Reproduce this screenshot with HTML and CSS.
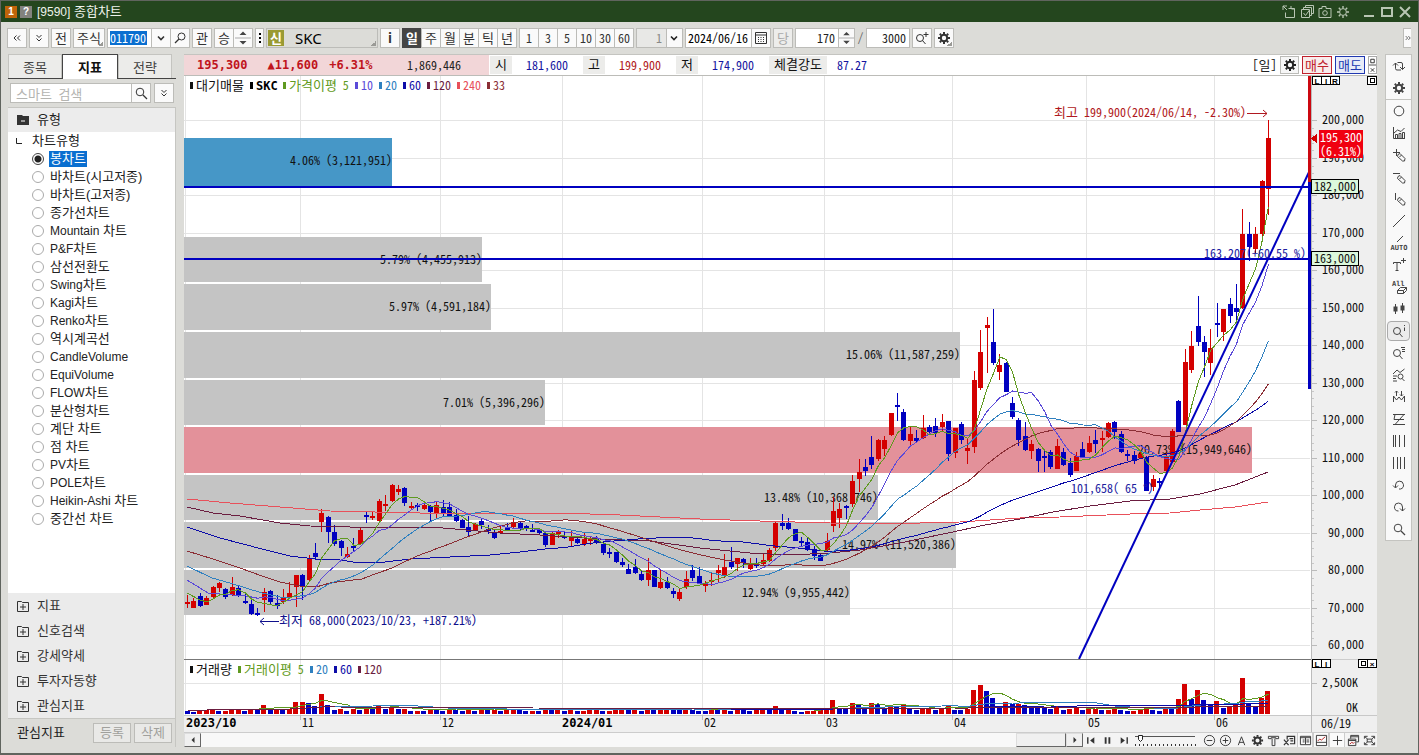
FILE: index.html
```html
<!DOCTYPE html>
<html lang="ko">
<head>
<meta charset="utf-8">
<title>[9590] 종합차트</title>
<link rel="stylesheet" href="styles.css">
</head>
<body>
<svg class="defs" aria-hidden="true">
  <symbol id="gear" viewBox="0 0 14 14"><circle cx="7" cy="7" r="3.2" fill="none" stroke="currentColor" stroke-width="2"/><path d="M7 1v2M7 11v2M1 7h2M11 7h2M2.8 2.8l1.4 1.4M9.8 9.8l1.4 1.4M2.8 11.2l1.4-1.4M9.8 4.2l1.4-1.4" stroke="currentColor" stroke-width="2"/></symbol>
  <symbol id="gear-thin" viewBox="0 0 14 14"><circle cx="7" cy="7" r="3.4" fill="none" stroke="currentColor"/><path d="M7 1v2.5M7 10.500v2.500M1 7h2.500M10.500 7h2.500M2.800 2.800l1.600 1.600M9.600 9.600l1.600 1.600M2.800 11.200l1.600-1.600M9.600 4.400l1.600-1.600" stroke="currentColor" stroke-width="1.400"/></symbol>
  <symbol id="mag" viewBox="0 0 14 14"><circle cx="6" cy="6" r="3.800" fill="none" stroke="currentColor"/><path d="M9 9l4 4" stroke="currentColor" stroke-width="1.300"/></symbol>
  <symbol id="mag-left" viewBox="0 0 14 14"><circle cx="8.500" cy="5.500" r="3.500" fill="none" stroke="currentColor"/><path d="M6 8l-4 4" stroke="currentColor" stroke-width="1.300"/></symbol>
  <symbol id="down" viewBox="0 0 14 14"><path d="M4 5.500l3 3 3-3" fill="none" stroke="currentColor" stroke-width="1.600"/></symbol>
  <symbol id="chev-l" viewBox="0 0 14 14"><path d="M6.500 4.500L4 7l2.500 2.500M10 4.500L7.500 7 10 9.500" fill="none" stroke="currentColor"/></symbol>
  <symbol id="chev-r" viewBox="0 0 14 14"><path d="M4 4.500L6.500 7 4 9.500M7.500 4.500L10 7 7.500 9.500" fill="none" stroke="currentColor"/></symbol>
  <symbol id="chev-d" viewBox="0 0 14 14"><path d="M4.500 4L7 6.500 9.500 4M4.500 7.500L7 10l2.500-2.500" fill="none" stroke="currentColor"/></symbol>
  <symbol id="spin" viewBox="0 0 16 18"><path d="M4.500 6L8 2.500 11.500 6zM4.500 12L8 15.500 11.500 12z" fill="#444"/><path d="M0 9h16" stroke="#aaa"/></symbol>
  <symbol id="plusbox" viewBox="0 0 12 12"><path d="M.5 1.500h4l1 1h6v9h-11zM3 7h6M6 4v6" fill="none" stroke="#333"/></symbol>
  <symbol id="pencil" viewBox="0 0 14 14"><path d="M6 6.500l2-1 5 5-.5 2.500-2 0-5-4.500z M7.500 9l2-2" fill="none" stroke="currentColor"/></symbol>
</svg>

<div class="window">
  <header class="titlebar">
    <span class="badge orange">1</span><span class="badge grey">?</span>
    <h1><small>[9590]</small> 종합차트</h1>
    <div class="winctl">
      <button aria-label="분리"><svg viewBox="0 0 14 14"><path d="M1 5V1h4M1 1l4 4M6.500 3.500h6v9h-9v-5M9 1v3M9.500 4h3" fill="none" stroke="currentColor"/></svg></button>
      <button aria-label="복사"><svg viewBox="0 0 14 14"><path d="M1.500 4.500h8v8h-8zM3.500 4V2.500h8v8H10M5.500 2V.5h8v8H12M3.500 8l2 2.500L9.500 5" fill="none" stroke="currentColor"/></svg></button>
      <button aria-label="캡처"><svg viewBox="0 0 14 14"><path d="M1 3.500h3v-2h4v2h5v9H1z" fill="none" stroke="currentColor"/><circle cx="7" cy="8" r="2.300" fill="none" stroke="currentColor"/></svg></button>
      <button aria-label="설정"><svg><use href="#gear-thin"/></svg></button>
      <button aria-label="최소화" class="wide"><svg viewBox="0 0 14 14"><path d="M2 11h10" stroke="currentColor" stroke-width="2"/></svg></button>
      <button aria-label="최대화"><svg viewBox="0 0 14 14"><path d="M2 3h10v8H2z" fill="none" stroke="currentColor" stroke-width="2"/></svg></button>
      <button aria-label="닫기"><svg viewBox="0 0 14 14"><path d="M2 2l10 10M12 2L2 12" stroke="currentColor" stroke-width="2"/></svg></button>
    </div>
  </header>

  <nav class="toolbar">
    <button class="tb" aria-label="이전"><svg><use href="#chev-l"/></svg></button>
    <button class="tb" aria-label="펼치기"><svg><use href="#chev-d"/></svg></button>
    <button class="tb">전</button>
    <button class="tb w-kind corner">주식</button>
    <div class="group">
      <span class="codebox"><input class="code" aria-label="종목코드" value="011790"></span>
      <button class="tb" aria-label="목록"><svg><use href="#down"/></svg></button>
      <button class="tb" aria-label="종목검색"><svg><use href="#mag-left"/></svg></button>
    </div>
    <button class="tb">관</button>
    <div class="group">
      <button class="tb">승</button>
      <button class="tb" aria-label="위아래"><svg class="spin"><use href="#spin"/></svg></button>
    </div>
    <button class="tb w-dots" aria-label="더보기"><svg viewBox="0 0 4 14"><path d="M1 2h2v2H1zM1 6h2v2H1zM1 10h2v2H1z"/></svg></button>
    <button class="stock corner"><span>신</span>SKC</button>
    <button class="tb info">i</button>
    <div class="group periods">
      <button class="tb on">일</button><button class="tb">주</button><button class="tb">월</button><button class="tb">분</button><button class="tb">틱</button><button class="tb">년</button>
    </div>
    <div class="group counts">
      <button class="tb">1</button><button class="tb">3</button><button class="tb">5</button><button class="tb">10</button><button class="tb">30</button><button class="tb">60</button>
    </div>
    <div class="selectbox"><select aria-label="간격" disabled><option>1</option></select><svg><use href="#down"/></svg></div>
    <div class="group">
      <input class="field date" aria-label="날짜" value="2024/06/16">
      <button class="tb" aria-label="달력"><svg viewBox="0 0 14 14"><path d="M1.500 1.500h11v11h-11zM1.500 4h11M4 6.500h1M6.500 6.500h1M9 6.500h1M4 8.500h1M6.500 8.500h1M9 8.500h1M4 10.500h1M6.500 10.500h1M9 10.500h1" fill="none" stroke="currentColor"/></svg></button>
    </div>
    <button class="tb off">당</button>
    <div class="group">
      <input class="field num" aria-label="표시 개수" value="170">
      <button class="tb w-spin" aria-label="개수 조절"><svg class="spin"><use href="#spin"/></svg></button>
    </div>
    <span class="slash">/</span>
    <input class="field num" aria-label="전체 개수" value="3000">
    <button class="tb" aria-label="확대"><svg viewBox="0 0 14 14"><circle cx="5" cy="7" r="3.500" fill="none" stroke="currentColor"/><path d="M7.500 9.500L10.500 13M8.500 3.500h5M11 1v5" stroke="currentColor"/></svg></button>
    <button class="tb corner" aria-label="설정"><svg><use href="#gear"/></svg></button>
    <button class="tb more" aria-label="더보기"><svg viewBox="3 0 8 14"><path d="M4 4.500L6.500 7 4 9.500M7.500 4.500L10 7 7.500 9.500" fill="none" stroke="currentColor"/></svg></button>
  </nav>

  <div class="body">
    <aside class="side">
      <div class="tabs" role="tablist">
        <button role="tab">종목</button><button role="tab" class="on" aria-selected="true">지표</button><button role="tab">전략</button>
      </div>
      <div class="search">
        <input aria-label="스마트 검색" placeholder="스마트 검색">
        <button class="tb" aria-label="검색"><svg><use href="#mag"/></svg></button>
        <button class="tb gap" aria-label="펼치기"><svg><use href="#chev-d"/></svg></button>
      </div>
      <section class="panel">
        <h2><svg viewBox="0 0 12 10"><path d="M0 0h5l1 1h6v9H0z" fill="#333"/><path d="M4 6h4" stroke="#fff"/></svg>유형</h2>
        <fieldset class="tree">
          <legend><svg viewBox="0 0 6 6"><path d="M.5 0v5.500H6" fill="none" stroke="#222"/></svg>차트유형</legend>
          <label><input type="radio" name="t" checked><span>봉차트</span></label>
          <label><input type="radio" name="t"><span>바차트(시고저종)</span></label>
          <label><input type="radio" name="t"><span>바차트(고저종)</span></label>
          <label><input type="radio" name="t"><span>종가선차트</span></label>
          <label><input type="radio" name="t"><span><small>Mountain</small> 차트</span></label>
          <label><input type="radio" name="t"><span><small>P&amp;F</small>차트</span></label>
          <label><input type="radio" name="t"><span>삼선전환도</span></label>
          <label><input type="radio" name="t"><span><small>Swing</small>차트</span></label>
          <label><input type="radio" name="t"><span><small>Kagi</small>차트</span></label>
          <label><input type="radio" name="t"><span><small>Renko</small>차트</span></label>
          <label><input type="radio" name="t"><span>역시계곡선</span></label>
          <label><input type="radio" name="t"><span><small>CandleVolume</small></span></label>
          <label><input type="radio" name="t"><span><small>EquiVolume</small></span></label>
          <label><input type="radio" name="t"><span><small>FLOW</small>차트</span></label>
          <label><input type="radio" name="t"><span>분산형차트</span></label>
          <label><input type="radio" name="t"><span>계단 차트</span></label>
          <label><input type="radio" name="t"><span>점 차트</span></label>
          <label><input type="radio" name="t"><span><small>PV</small>차트</span></label>
          <label><input type="radio" name="t"><span><small>POLE</small>차트</span></label>
          <label><input type="radio" name="t"><span><small>Heikin-Ashi</small> 차트</span></label>
          <label><input type="radio" name="t"><span>중간선 차트</span></label>
        </fieldset>
        <ul class="folders">
          <li><button><svg><use href="#plusbox"/></svg>지표</button></li>
          <li><button><svg><use href="#plusbox"/></svg>신호검색</button></li>
          <li><button><svg><use href="#plusbox"/></svg>강세약세</button></li>
          <li><button><svg><use href="#plusbox"/></svg>투자자동향</button></li>
          <li><button><svg><use href="#plusbox"/></svg>관심지표</button></li>
        </ul>
        <div class="fav"><span>관심지표</span><button disabled>등록</button><button disabled>삭제</button></div>
      </section>
    </aside>

    <main class="main">
      <div class="quote">
        <div class="now"><b class="price">195,300</b><b class="diff">▲11,600</b><b class="rate">+6.31%</b><span class="vol">1,869,446</span></div>
        <span class="key">시</span><span class="val blue">181,600</span>
        <span class="key">고</span><span class="val red">199,900</span>
        <span class="key">저</span><span class="val blue">174,900</span>
        <span class="key wide">체결강도</span><span class="val blue last">87.27</span>
        <div class="orders">
          <span>[일]</span>
          <button class="ord" aria-label="차트 설정"><svg><use href="#gear"/></svg></button>
          <button class="ord buy">매수</button>
          <button class="ord sell">매도</button>
          <div class="mini"><button aria-label="최대화"><svg viewBox="0 0 8 8"><path d="M2 2h4v4H2z" fill="none" stroke="#222"/></svg></button><button aria-label="닫기"><svg viewBox="0 0 8 8"><path d="M2 2l4 4M6 2L2 6" stroke="#222"/></svg></button></div>
        </div>
      </div>
      <svg id="chart" class="chart" viewBox="184 76 1193 656" preserveAspectRatio="xMinYMin meet" role="img" aria-label="SKC 일봉 차트"></svg>
      <div class="bottombar">
        <div class="scroll"><button aria-label="왼쪽"><svg viewBox="0 0 8 8"><path d="M5.500 1v6l-3-3z"/></svg></button><div class="track"><div class="thumb"></div></div><button aria-label="오른쪽"><svg viewBox="0 0 8 8"><path d="M2.500 1v6l3-3z"/></svg></button></div>
        <button aria-label="처음"><svg viewBox="0 0 14 14"><path d="M3 3.500v7" stroke="currentColor" stroke-width="1.500"/><path d="M10 3.500v7L5.500 7z"/></svg></button>
        <button aria-label="일시정지"><svg viewBox="0 0 14 14"><path d="M5 3.500v7M9 3.500v7" stroke="currentColor" stroke-width="2"/></svg></button>
        <button aria-label="끝"><svg viewBox="0 0 14 14"><path d="M11 3.500v7" stroke="currentColor" stroke-width="1.500"/><path d="M4 3.500v7L8.500 7z"/></svg></button>
        <svg class="slider" viewBox="0 0 64 14"><path d="M1 3.500h60" stroke="#555"/><path d="M1 12h62" stroke="#333" stroke-width="2" stroke-dasharray="1 3"/><path d="M4.500 2.500h4v4l-2 2-2-2z" fill="#fff" stroke="#222"/></svg>
        <button aria-label="축소"><svg viewBox="0 0 14 14"><circle cx="7" cy="7" r="5.500" fill="none" stroke="currentColor"/><path d="M4 7h6" stroke="currentColor"/></svg></button>
        <button aria-label="확대"><svg viewBox="0 0 14 14"><circle cx="7" cy="7" r="5.500" fill="none" stroke="currentColor"/><path d="M4 7h6M7 4v6" stroke="currentColor"/></svg></button>
        <button aria-label="글꼴"><svg viewBox="0 0 14 14"><path d="M3.500 12L7 3l3.500 9M4.500 9h5" fill="none" stroke="currentColor"/></svg></button>
        <button aria-label="설정"><svg><use href="#gear"/></svg></button>
        <button aria-label="도구"><svg viewBox="0 0 14 14"><path d="M1.500 5V2.500h11V5H9.500V4h-5v1zM5.500 5v7.500h3V5" fill="none" stroke="currentColor"/></svg></button>
        <button aria-label="삭제"><svg viewBox="0 0 14 14"><path d="M4.500 6V2.500h8v8h-5M7 5h4M8 7.500h3M1 6l5 6M6 6l-5 6" fill="none" stroke="currentColor" stroke-width="1.300"/></svg></button>
        <button class="on" aria-label="데이터창"><svg viewBox="0 0 14 14"><path d="M1.500 2.500h11v9h-11zM1.500 4h11M4 6.500h2M4 8.500h2M8 6.500h3M8 8.500h3M7 4v7" fill="none" stroke="currentColor"/></svg></button>
        <button class="on" aria-label="차트"><svg viewBox="0 0 14 14"><path d="M1.500 1.500h11v11h-11zM1.500 9h11" fill="none" stroke="currentColor"/><path d="M3 7.500l2-2 2 1 4-3.500" fill="none" stroke="#b22"/></svg></button>
        <button class="on" aria-label="십자선"><svg viewBox="0 0 14 14"><path d="M7 2v10M2 7h10" stroke="currentColor"/></svg></button>
        <button aria-label="창"><svg viewBox="0 0 14 14"><path d="M1.500 5.500h8v7h-8zM1.500 7h8M4 5V1.500h8.500v7H10M4 3h8" fill="none" stroke="currentColor"/><path d="M3 11l2-2 2 1 1-1" fill="none" stroke="#b22"/></svg></button>
        <button aria-label="전체화면"><svg viewBox="0 0 14 14"><path d="M1.500 5V2.500H5M9 2.500h3.500V5M12.500 9v2.500H9M5 11.500H1.500V9M4.500 5.500h5v3h-5zM2 3l3 2.500M12 3L9.500 5.500M2 11l3-2.500M12 11L9.500 8.500" fill="none" stroke="currentColor"/></svg></button>
      </div>
    </main>

    <div class="tools" id="tools">
      <button aria-label="새로고침"><svg viewBox="0 0 14 14"><path d="M3.500 4v5.500q0 1.500 1.500 1.500h4M1 6.500L3.500 4 6 6.500M10.500 10.500V5q0-1.500-1.500-1.500H5.500M8 8l2.500 2.500L13 8" fill="none" stroke="currentColor"/></svg></button>
      <button aria-label="설정" class="end"><svg><use href="#gear"/></svg></button>
      <button aria-label="원"><svg viewBox="0 0 14 14"><circle cx="7" cy="7" r="4.800" fill="none" stroke="currentColor"/></svg></button>
      <button aria-label="지표"><svg viewBox="0 0 14 14"><path d="M1.500 1v11.500H13M3.500 12V8.500h2V12M7 12V7.500h2V12M10.500 12V6.500h2V12M2 7l3.500-3L9 5.500 12.500 2" fill="none" stroke="currentColor"/></svg></button>
      <button aria-label="십자선"><svg viewBox="0 0 14 14"><path d="M1 4.500h7M4.500 1v7" stroke="currentColor"/><use href="#pencil"/></svg></button>
      <button aria-label="수평선"><svg viewBox="0 0 14 14"><path d="M1 3.500h7" stroke="currentColor"/><use href="#pencil"/></svg></button>
      <button aria-label="수직선"><svg viewBox="0 0 14 14"><path d="M3.500 1v7" stroke="currentColor"/><use href="#pencil"/></svg></button>
      <button aria-label="추세선"><svg viewBox="0 0 14 14"><path d="M1 13L13 1" stroke="currentColor"/></svg></button>
      <button aria-label="자동추세선"><svg class="big" viewBox="0 0 18 18"><path d="M7 8l6-6" stroke="currentColor"/><text x="9" y="16" class="tiny" text-anchor="middle">AUTO</text></svg></button>
      <button aria-label="텍스트"><svg viewBox="0 0 14 14"><path d="M1.500 6V4.500h7V6M5 4.500v8M3.500 12.500h3M9 2.500h5M11.500 0v5" fill="none" stroke="currentColor"/></svg></button>
      <button aria-label="전체 지우기"><svg class="big" viewBox="0 0 18 18"><text x="2" y="8" class="tiny">All</text><path d="M7.500 12.500l3-3h6v3l-3 3h-6zM7.500 12.500h6l3-3M13.500 12.500v3" fill="none" stroke="currentColor"/></svg></button>
      <button aria-label="봉차트"><svg viewBox="0 0 14 14"><path d="M1.500 4.500h4v5h-4zM8.500 3.500h4v5h-4z"/><path d="M3.500 2v10M10.500 1v10" stroke="currentColor"/></svg></button>
      <button aria-label="정보" class="on"><svg viewBox="0 0 14 14"><circle cx="5" cy="7" r="3.500" fill="none" stroke="currentColor"/><path d="M7.500 9.500L10.500 13M12.500 1v1M12.500 3.500V7" stroke="currentColor"/></svg></button>
      <button aria-label="목록 검색"><svg viewBox="0 0 14 14"><circle cx="5" cy="7" r="3.500" fill="none" stroke="currentColor"/><path d="M7.500 9.500L10.500 13M9 1.500h4M10 3.500h3M10 5.500h3" stroke="currentColor"/></svg></button>
      <button aria-label="차트 검색"><svg viewBox="0 0 14 14"><path d="M1 6l4-4 3 2.500L12.500 1M1 8h4M1 10.500h3M1 13h4" fill="none" stroke="currentColor"/><circle cx="8.500" cy="8.500" r="2.500" fill="none" stroke="currentColor"/><path d="M10 10.500l2.500 2.500" stroke="currentColor"/></svg></button>
      <button aria-label="변곡점"><svg viewBox="0 0 14 14"><path d="M1.500 12V6l3 4L7 7l2.500 3 3-4v6M4.500 6V1M3 2.500L4.500 1 6 2.500M9.500 1v5M8 4.500L9.500 6 11 4.500" fill="none" stroke="currentColor"/></svg></button>
      <button aria-label="채널"><svg viewBox="0 0 14 14"><path d="M1 2.500h12M1 12.500h12M2 7.500h10M3 2.500l-1 5M12 2.500L3 12.500" fill="none" stroke="currentColor"/></svg></button>
      <button aria-label="분할선"><svg viewBox="0 0 14 14"><path d="M1.500 1v12M3.500 1v12M7.500 1v12M12.500 1v12" stroke="currentColor"/></svg></button>
      <button aria-label="등분선"><svg viewBox="0 0 14 14"><path d="M1.500 1v12M5.500 1v12M8.500 1v12M12.500 1v12" stroke="currentColor"/></svg></button>
      <button aria-label="실행취소"><svg viewBox="0 0 14 14"><path d="M3.500 9.500V7a4 4 0 1 1 5 4H7M1 7.500L3.500 10 6 7.500" fill="none" stroke="currentColor"/></svg></button>
      <button aria-label="다시실행"><svg viewBox="0 0 14 14"><path d="M6.500 11H6a4 4 0 1 1 4.500-4v4M8 8.500l2.500 2.500L13 8.500" fill="none" stroke="currentColor"/></svg></button>
      <button aria-label="돋보기"><svg><use href="#mag"/></svg></button>
    </div>
  </div>
</div>
<script src="chart.js"></script>
</body>
</html>
```

FILE: styles.css
```css
* { box-sizing: border-box; }
body {
  margin: 0;
  min-height: 100vh;
  font: 12px/16px "Noto Sans Mono CJK KR", "Liberation Sans", "Noto Sans CJK KR", sans-serif;
  color: #222;
  background: #dcdcd8;
}
h1, h2, ul, fieldset, legend { margin: 0; padding: 0; border: 0; font: inherit; list-style: none; }
button, input, select { font: inherit; color: inherit; margin: 0; padding: 0; border-radius: 0; }
button { display: flex; align-items: center; justify-content: center; border: 0; background: none; }
small { font-size: 12px; }
svg { display: block; width: 14px; height: 14px; }
.defs { position: absolute; width: 0; height: 0; }

.window {
  display: flex;
  flex-direction: column;
  min-height: 100vh;
  border: 1px solid #60645e;
  border-bottom-width: 2px;
}

.titlebar { display: flex; align-items: center; height: 21px; padding: 0 6px 0 4px; background: #24461e; color: #eef2ec; }
.titlebar h1 { font-family: "Liberation Sans", "Noto Sans Mono CJK KR", sans-serif; font-size: 13px; margin-left: 5px; }
.badge { width: 12px; height: 12px; margin-right: 3px; font: bold 10px/12px "Liberation Sans", sans-serif; text-align: center; color: #fff; }
.badge.orange { background: #c0640a; }
.badge.grey { background: #82827e; margin-right: 0; }
.winctl { display: flex; gap: 4px; margin-left: auto; color: #b9c6b4; }
.winctl .wide { margin-left: 8px; }

.toolbar { display: flex; align-items: center; gap: 2px; height: 32px; padding: 0 7px 0 6px; }
.group { display: flex; }
.group > * + * { margin-left: -1px; }
.tb { flex: none; width: 20px; height: 20px; border: 1px solid #bcbcb8; background: #fafafa; color: #333; font-size: 13px; }
.counts .tb { font-size: 12px; }
.w-kind { width: 32px; }
.w-dots { width: 9px; }
.w-spin { width: 17px; }
.w-dots svg { width: 4px; }
.spin { width: 16px; height: 18px; }
.corner { background-image: linear-gradient(135deg, transparent 50%, #9a9a96 50%); background-size: 5px 5px; background-position: right 1px bottom 1px; background-repeat: no-repeat; }
.codebox { width: 45px; height: 20px; padding: 2px; border: 1px solid #bcbcb8; background: #fff; }
.code { display: block; width: 37px; height: 14px; border: 0; background: #0a6fd0; color: #fff; }
.stock { width: 112px; height: 20px; justify-content: flex-start; gap: 11px; border: 1px solid #bcbcb8; background-color: #dcdcd8; font: 15px/18px "Noto Sans", sans-serif; color: #000; }
.stock span { width: 16px; margin-left: 1px; font: bold 13px/16px "Noto Sans Mono CJK KR", "Noto Sans CJK KR", sans-serif; background: #9a9a33; color: #fff; }
.info { font-weight: bold; }
.periods .on { background: #444; border-color: #444; color: #fff; font-weight: bold; }
.selectbox { display: flex; width: 47px; height: 20px; border: 1px solid #bcbcb8; background: #fafafa; }
.selectbox select { appearance: none; width: 30px; border: 0; border-right: 1px solid #bcbcb8; background: #e8e8e6; color: #888; opacity: 1; text-align: right; padding-right: 4px; }
.selectbox svg { margin: 2px 0; }
.field { height: 20px; padding-bottom: 2px; border: 1px solid #bcbcb8; background: #fff; }
.date { width: 67px; padding-left: 2px; color: #000; }
.num { width: 44px; padding-right: 3px; text-align: right; }
.slash { width: 7px; text-align: center; color: #666; }
.off { color: #aaa; background: #ededeb; }
.more { width: 8px; margin-left: auto; border-right: 0; }
.more svg { width: 6px; }

.body { display: flex; flex: 1; align-items: stretch; gap: 8px; padding: 0 6px 6px 7px; }

.side { display: flex; flex-direction: column; width: 168px; flex: none; font-size: 13px; }
.tabs { display: flex; height: 25px; border-bottom: 1px solid #444; }
.tabs button { width: 54px; height: 24px; border: 1px solid #c4c4c0; border-bottom: 0; background: #ececea; color: #444; }
.tabs .on { width: 56px; height: 25px; border-color: #444; background: #fff; font-weight: bold; color: #111; }
.search { display: flex; padding: 4px 3px 4px 2px; }
.search input { width: 122px; height: 20px; padding-left: 5px; border: 1px solid #bcbcb8; background: #fff; }
.search input::placeholder { color: #b4b4b0; opacity: 1; }
.search .tb { margin-left: -1px; }
.search .gap { margin-left: 3px; }
.panel { display: flex; flex-direction: column; flex: 1; border: 1px solid #c6c6c2; border-width: 1px 1px 0 0; background: #fff; font-family: "Liberation Sans", "Noto Sans Mono CJK KR", "Noto Sans CJK KR", sans-serif; }
.panel h2 { display: flex; align-items: center; height: 24px; gap: 8px; padding-left: 9px; background: #ececec; }
.panel h2 svg { width: 12px; height: 10px; }
.tree { display: flex; flex-direction: column; flex: 1; min-width: 0; }
.tree legend { display: flex; align-items: center; height: 18px; gap: 10px; padding-left: 8px; }
.tree legend svg { width: 6px; height: 6px; }
.tree label { display: flex; align-items: center; height: 18px; gap: 5px; padding-left: 24px; }
.tree input { appearance: none; width: 12px; height: 12px; border: 1px solid #aaa; border-radius: 50%; background: #fff; }
.tree input:checked { border-color: #444; background: radial-gradient(circle, #222 3px, #fff 4px); }
.tree label span { padding: 0 1px; }
.tree input:checked + span { background: #0a6fd0; color: #fff; }
.folders { background: #ebebeb; }
.folders button { width: 100%; height: 25px; justify-content: flex-start; gap: 8px; padding-left: 9px; color: #333; }
.folders svg { width: 12px; height: 12px; }
.fav { display: flex; align-items: center; gap: 3px; height: 29px; padding: 0 3px 0 9px; border-top: 1px solid #c6c6c2; background: #dcdcd8; }
.fav span { flex: 1; }
.fav button { width: 38px; height: 20px; border: 1px solid #bcbcb8; background: #e9e9e7; color: #a0a09c; }

.main { display: flex; flex-direction: column; flex: 1; min-width: 0; border-top: 1px solid #c4c4c0; }
.quote { display: flex; align-items: center; height: 21px; background: #fff; border-bottom: 1px solid #bcbcb8; }
.now { display: flex; align-items: center; width: 305px; height: 20px; background: #f2d6d8; color: #c0141c; }
.quote b { font: bold 12px/16px "DejaVu Sans Mono", monospace; }
.price { margin-left: 13px; }
.diff { margin-left: 20px; }
.rate { margin-left: 11px; }
.vol { margin-left: auto; padding-right: 28px; color: #222; }
.key { width: 22px; height: 18px; margin-left: 1px; font-size: 13px; text-align: center; background: #ececea; color: #111; }
.key.wide { width: 58px; }
.val { width: 70px; padding-left: 14px; }
.blue { color: #1414a0; }
.red { color: #b01820; }
.last { padding-left: 10px; }
.orders { display: flex; align-items: center; gap: 3px; margin-left: auto; font-size: 13px; }
.ord { min-width: 19px; height: 18px; border: 1px solid #bcbcb8; background: #f6f6f6; }
.buy { width: 30px; border-color: #c0202c; color: #c0202c; background: #f8ecec; }
.sell { width: 30px; border-color: #2038b0; color: #2038b0; background: #e8ecf8; }
.mini button { width: 9px; height: 9px; border: 1px solid #aaa; background: #fff; }
.mini svg { width: 8px; height: 8px; }
.chart { width: 100%; height: auto; background: #fff; }
.chart text { font: 12px "Noto Sans Mono CJK KR", "Liberation Sans Narrow", sans-serif; }
.chart .ko { font-size: 13px; }
.chart .bold { font: bold 12px "DejaVu Sans Mono", monospace; }
.chart .box { font: bold 8px "Liberation Sans", sans-serif; }
.bottombar { display: flex; align-items: center; height: 15px; border-top: 1px solid #ccc; background: #f4f4f4; color: #333; }
.bottombar > button { width: 16px; height: 14px; }
.bottombar > .on { border: 1px solid #ccc; border-width: 0 1px; background: #fafafa; }
.bottombar svg { width: 13px; height: 13px; fill: currentColor; }
.scroll { display: flex; flex: 1; }
.scroll button { width: 17px; height: 14px; border: 1px solid #888; border-color: #ddd #666 #666 #ddd; background: #f0f0f0; }
.scroll svg { width: 8px; height: 8px; }
.track { display: flex; flex: 1; background: #f8f8f8; }
.thumb { width: 50px; height: 14px; margin-left: auto; border: 1px solid #888; border-color: #ddd #666 #666 #ddd; background: #f0f0f0; }
.bottombar .slider { width: 64px; height: 14px; margin: 0 3px; }

.tools { align-self: flex-start; width: 27px; border: 1px solid #c4c4c0; background: #f9f9f9; color: #444; }
.tools button { width: 25px; height: 22px; }
.tools .end { height: 23px; border-bottom: 1px solid #c4c4c0; }
.tools .on { height: 20px; width: 23px; margin: 1px; border: 1px solid #aaa; border-radius: 4px; background: #ececec; }
.tools svg { fill: currentColor; overflow: visible; }
.tools .big { width: 18px; height: 18px; }
.tiny { font: bold 7px "DejaVu Sans Mono", monospace; }
```

FILE: chart.js
```js
const svg = document.getElementById('chart');
const out = [];
const rect = (x, y, w, h, fill, extra = '') => out.push(`<rect x="${x}" y="${y}" width="${w}" height="${h}" fill="${fill}" ${extra}/>`);
const line = (x1, y1, x2, y2, stroke, w = 1) => out.push(`<line x1="${x1}" y1="${y1}" x2="${x2}" y2="${y2}" stroke="${stroke}" stroke-width="${w}"/>`);
const hangul = s => s.replace(/[가-힣]+/g, m => `<tspan class="ko">${m}</tspan>`);
const text = (x, y, s, fill = '#111', anchor = 'start', cls = '') => out.push(`<text x="${x}" y="${y}" fill="${fill}" text-anchor="${anchor}" class="${cls}">${hangul(s)}</text>`);
const poly = (pts, c) => out.push(`<polyline points="${pts.map(p => p.join(',')).join(' ')}" fill="none" stroke="${c}"/>`);
const RED = '#d40000', BLUE = '#0000c0', GRID = '#e4e4e4', AXIS = '#efefef';
const C5 = '#5f9a20', C10 = '#5b4ad8', C20 = '#2f80c0', C60 = '#0c0ca8', C120 = '#6b1d40', C240 = '#e8505a', C33 = '#8b2e35';

// colour, high, body top, body bottom, low
const candles = `R595 602 604 608,R598 601 608 608,B593 596 606 607,R596 598 605 605,R586 587 597 598,R582 583 588 592,B588 589 597 599,R577 587 595 596,B586 588 595 597,B593 601 602 604
B600 604 614 615,B608 613 614 616,R588 592 600 612,B590 591 602 604,B595 603 606 609,R589 598 602 604,R582 593 598 599,R575 575 587 607,B574 575 586 600,R555 558 580 581
B543 553 557 559,R509 513 522 532,B516 517 532 543,B525 532 544 546,B540 541 548 556,R547 554 557 558,B538 546 548 551,R527 530 544 545,B511 515 517 523,R512 516 518 520
R499 501 521 522,R495 504 505 511,R484 485 501 502,R485 489 492 495,B487 488 503 506,R502 506 508 509,B503 505 506 511,R502 505 509 510,B505 506 512 521,R502 505 513 518
B500 507 513 516,B502 507 516 516,B509 515 521 522,B519 520 528 528,B516 527 532 537,R523 524 530 531,B519 521 525 529,B525 529 530 534,B530 532 538 539,R525 531 533 534
B523 527 531 531,R518 522 527 528,B522 523 529 530,B525 526 527 531,B524 530 531 532,B528 529 533 534,B532 533 545 547,R532 533 545 545,R530 531 534 538,B532 536 538 539
R531 536 541 547,B538 539 543 544,R533 539 544 546,R536 538 541 545,B536 538 542 544,B542 544 553 555,B548 552 553 558,B552 552 562 563,B558 562 565 567,B564 569 574 574
B559 567 573 574,B570 574 580 581,R558 570 580 586,B570 570 587 587,R570 582 588 589,B577 582 588 589,B588 591 594 598,R588 592 599 601,R571 579 587 589,B565 570 578 581
B567 576 584 584,R581 583 586 592,R572 580 581 586,R565 570 573 583,R554 567 575 578,B547 562 567 569,R558 558 564 571,B558 559 563 568,R558 564 569 570,B558 564 565 568
R554 560 564 565,R548 550 561 562,R522 523 548 551,B514 523 526 530,B518 523 529 530,B529 529 541 541,B537 541 542 547,B538 542 550 551,B546 549 556 560,B554 555 561 561
R533 541 550 551,R497 511 526 532,R503 509 518 528,B505 506 507 519,R475 481 504 507,R459 472 479 492,B459 467 471 476,B436 457 465 469,R439 440 459 461,R436 440 449 456
R413 413 435 436,B393 405 406 421,B409 412 440 441,R426 434 441 445,B430 438 441 443,R415 428 438 439,B425 427 432 435,B418 426 433 437,R414 422 427 432,B421 421 454 461
R428 428 453 458,B422 424 440 444,R439 448 451 464,R371 380 447 453,R330 352 388 390,R317 325 328 373,B309 342 363 365,R354 365 372 380,B362 363 392 392,B397 403 417 419
B418 420 440 446,B422 436 450 451,R440 444 451 459,B448 449 461 472,B451 456 457 472,B450 452 467 469,R439 446 469 469,B448 452 465 466,B458 463 475 477,R452 456 471 471
B442 449 457 457,R436 443 452 453,B430 440 444 453,R431 438 439 452,R422 423 437 438,B421 422 432 439,B431 434 452 453,B450 454 455 461,B451 455 461 464,R451 454 458 458
B456 457 491 491,R475 479 487 491,B478 481 482 489,R453 457 471 472,R429 431 462 463,B400 401 432 432,R349 362 425 425,R331 346 370 373,B296 326 342 346,B336 342 352 377
R329 348 363 375,B303 323 325 337,R309 309 332 341,B298 304 316 323,B284 308 312 323,R209 234 308 309,B222 234 247 261,R227 234 249 253,R180 181 234 238,R120 138 189 215`
  .split(/[,\n]/).map(s => [s[0], ...s.slice(1).split(' ').map(Number)]);
const X = i => 187.5 + i * 6.396;
const closes = candles.map(c => c[0] === 'R' ? c[2] : c[3]);

const volumes = [3,2,3,4,4,3,3,4,4,3,4,4,9,4,5,4,5,12,12,11,8,20,9,4,5,3,5,4,6,5,8,5,7,5,5,3,3,3,4,4,
  3,5,4,3,4,3,5,4,4,3,4,5,4,3,3,3,5,4,4,3,4,3,3,4,5,3,3,4,5,4,4,3,4,4,4,5,4,4,5,4,3,3,4,4,4,3,4,4,3,4,
  5,4,8,4,4,3,2,3,3,4,4,14,6,5,11,9,5,11,10,5,8,8,10,6,4,5,5,4,5,9,4,4,5,24,29,23,16,8,12,10,10,9,8,8,6,5,7,4,5,6,
  4,5,5,4,4,5,4,3,3,4,7,4,3,6,5,15,30,15,24,14,10,13,6,7,9,36,11,8,16,23];

// plot, axes and grid
rect(1312, 76, 65, 656, AXIS);
rect(184, 715, 1193, 17, AXIS);
for (let k = 0; k < 15; k++) {
  const y = Math.round(120 + k * 37.5) + 0.5;
  line(184, y, 1310, y, GRID);
  for (let m = 1; m < 5 && k < 14; m++) line(1312, y + m * 7.5, 1314, y + m * 7.5, '#c8c8c8');
  line(1312, y, 1317, y, '#bbb');
  text(1364, y + 3.5, (200 - k * 10) + ',000', '#111', 'end');
}
for (const x of [185, 300, 440, 562, 702, 824, 952, 1086, 1214]) line(x + .5, 76, x + .5, 715, GRID);
line(184, 683.5, 1310, 683.5, GRID);
line(184, 715.5, 1377, 715.5, '#c8c8c8');
line(1311.5, 76, 1311.5, 732, '#bbb');

// volume by price
const zones = [[392, 138, 48, '#4697c7', '4.06% (3,121,951)'], [482, 237, 45, '#c4c4c4', '5.79% (4,455,913)'], [491, 284, 46, '#c4c4c4', '5.97% (4,591,184)'],
  [960, 332, 46, '#c4c4c4', '15.06% (11,587,259)'], [545, 380, 45, '#c4c4c4', '7.01% (5,396,296)'], [1252, 427, 46, '#e3919a', '20.73% (15,949,646)'],
  [878, 475, 45, '#c4c4c4', '13.48% (10,368,746)'], [956, 522, 46, '#c4c4c4', '14.97% (11,520,386)'], [850, 570, 45, '#c4c4c4', '12.94% (9,955,442)']];
for (const [x, y, h, c, s] of zones) { rect(184, y, x - 184, h, c); text(x, y + 27, s, '#111', 'end'); }

// price candles
candles.forEach(([c, h, t, b, l], i) => {
  const x = Math.round(X(i) - .5), col = c === 'R' ? RED : BLUE;
  rect(x, h, 1, Math.max(1, l - h), col);
  rect(x - 2, t, 5, Math.max(2, b - t), col);
});

// moving averages: lead-in points, then the running mean of closes
const mean = (a, i, n) => { const s = a.slice(Math.max(0, i - n + 1), i + 1); return s.reduce((p, q) => p + q, 0) / s.length; };
const ma = (n, c, lead) => { const p = [...lead]; for (let i = n - 1; i < 170; i++) p.push([X(i).toFixed(1), mean(closes, i, n).toFixed(1)]); poly(p, c); };
poly([[187,499],[230,503],[280,507],[330,511],[420,513],[560,513],[620,515],[700,519],[760,521],[830,523],[880,524],[960,522],[1020,518],[1060,517],[1130,514],[1170,513],[1200,510],[1235,507],[1268,502]], C240);
poly([[187,507],[213,513],[240,516],[280,523],[310,526],[350,527],[430,527],[455,529],[500,533],[540,535],[600,539],[650,541],[700,548],[750,553],[790,555],[830,553],[860,550],[900,543],[948,533],[985,525],[1020,519],[1053,512],[1090,506],[1130,501],[1170,499],[1200,494],[1235,485],[1268,472]], C120);
ma(60, C60, [[187,527],[220,538],[262,549],[290,556],[315,559],[340,560],[360,563],[385,562],[410,559],[450,557],[490,555],[520,552],[545,549]]);
ma(33, C33, [[187,551],[213,559],[240,568],[262,576],[280,582],[300,586],[316,587],[330,583],[345,581],[362,579],[375,574]]);
ma(20, C20, [[187,566],[212,578],[230,583],[262,593],[285,598]]);
ma(10, C10, [[187,580],[200,588],[208,593],[220,594],[233,595]]);
ma(5, C5, [[187,593],[200,600],[207,602]]);

// drawn lines and notes
rect(184, 186, 1127, 2, BLUE);
rect(184, 258, 1127, 2, BLUE);
out.push('<line x1="1079" y1="659" x2="1310" y2="170" stroke="#0000c0" stroke-width="2" shape-rendering="auto"/>');
rect(1308, 76, 3, 111, '#cc0810');
rect(1308, 182, 3, 207, BLUE);
text(1054, 117, '최고 199,900(2024/06/14, -2.30%)', '#b01820');
out.push('<path d="M1247 113.500h20M1263 110l4 3.500-4 3.500" fill="none" stroke="#b01820" shape-rendering="auto"/>');
text(279, 625, '최저 68,000(2023/10/23, +187.21%)', '#10108c');
out.push('<path d="M279 621.500h-19M264 618l-4 3.500 4 3.500" fill="none" stroke="#10108c" shape-rendering="auto"/>');
text(1204, 258, '163.207(+60.55 %)', '#2020a0');
text(1071, 493, '101,658( 65 °)', '#2020a0');

// volume panel
line(184, 659.5, 1311, 659.5, '#777');
line(1311, 659.5, 1377, 659.5, '#ccc');
volumes.forEach((v, i) => rect(Math.round(X(i)) - 3, 714 - v, 5, v, i === 0 || v < volumes[i - 1] || (v === volumes[i - 1] && i % 2) ? BLUE : RED));
const vma = (n, c) => poly(volumes.map((v, i) => [X(i).toFixed(1), (713 - mean(volumes, i, n)).toFixed(1)]), c);
vma(5, C5); vma(20, C20); vma(60, C60); vma(120, C120);
text(1358, 687, '2,500K', '#111', 'end');
text(1358, 712, '0K', '#111', 'end');
line(1312, 683.5, 1317, 683.5, '#bbb');

// date axis
text(186, 727, '2023/10', '#000', 'start', 'bold');
text(562, 727, '2024/01', '#000', 'start', 'bold');
for (const [x, s] of [[301, '11'], [441, '12'], [703, '02'], [825, '03'], [953, '04'], [1087, '05'], [1215, '06']]) { text(x + 1, 727, s); line(x - .5, 715, x - .5, 720, '#bbb'); }
text(1321, 728, '06/19');

// legends
for (const [x, y, s, c, cls] of [[190, 90, '대기매물', '#111'], [250, 90, 'SKC', '#000', 'bold'], [283, 90, '가격이평 5', C5], [355, 90, '10', C10], [379, 90, '20', C20], [403, 90, '60', C60], [427, 90, '120', C120], [457, 90, '240', C240], [487, 90, '33', C33],
  [190, 674, '거래량', '#111'], [238, 674, '거래이평 5', C5], [310, 674, '20', C20], [334, 674, '60', C60], [358, 674, '120', C120]]) {
  rect(x, y - 8, 3, 7, c);
  text(x + 6, y, s, c, 'start', cls || '');
}

// price tags
rect(1319, 130, 44, 28, '#f00010');
text(1320, 142, '195,300', '#fff'); text(1320, 156, '(6.31%)', '#fff');
out.push('<path d="M1311 138.500l6-5v10z" fill="#d40000"/>');
for (const [y, s] of [[180, '182,000'], [252, '163,000']]) { rect(1311.5, y - .5, 47, 14, '#dcf8dc', 'stroke="#000"'); text(1314, y + 11, s); }
const box = (x, y, s) => { rect(x + .5, y + .5, 9, 8, '#fff', 'stroke="#000"'); s ? text(x + 5, y + 8, s, '#000', 'middle', 'box') : rect(x + 3.500, y + 2.500, 4, 4, '#fff', 'stroke="#000"'); };
box(1312, 76, 'L'); box(1321, 76, 'I'); box(1330, 76, 'R'); box(1367, 76);
box(1312, 659, 'L'); box(1321, 659, 'I'); box(1358, 659); box(1367, 659, '×');

svg.innerHTML = `<g shape-rendering="crispEdges">${out.join('')}</g>`;
```
